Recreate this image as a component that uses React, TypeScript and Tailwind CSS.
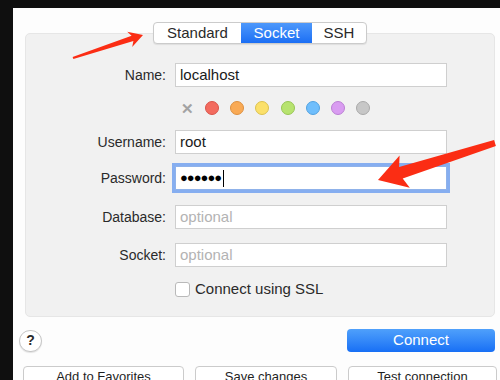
import React from 'react';

const font = { fontFamily: '"Liberation Sans", Arial, sans-serif' };

const colorDots = [
  { bg: 'bg-[#f36b5f]', border: 'border-[#d9544a]' },
  { bg: 'bg-[#f9aa55]', border: 'border-[#dd9040]' },
  { bg: 'bg-[#fbe06a]', border: 'border-[#dcc24f]' },
  { bg: 'bg-[#b7e36f]', border: 'border-[#98c655]' },
  { bg: 'bg-[#6fbefc]', border: 'border-[#52a2e0]' },
  { bg: 'bg-[#d99cf1]', border: 'border-[#bb80d4]' },
  { bg: 'bg-[#c7c7c7]', border: 'border-[#a9a9a9]' },
];

type FieldProps = {
  label: string;
  children: React.ReactNode;
  className?: string;
};

const Field = ({ label, children, className = '' }: FieldProps) => (
  <div className={`flex items-center ${className}`}>
    <div className="w-[140px] text-right text-[14px] text-[#2a2a2a]">{label}</div>
    <div className="ml-[9px]">{children}</div>
  </div>
);

const TextBox = ({ value, placeholder }: { value?: string; placeholder?: string }) => (
  <div className="w-[272px] h-[24px] bg-white border border-[#cfcfcf] flex items-center px-[4px] text-[15px]">
    {value ? (
      <span className="text-[#1a1a1a]">{value}</span>
    ) : (
      <span className="text-[#b3b3b3]">{placeholder}</span>
    )}
  </div>
);

const Arrows = () => (
  <svg className="absolute inset-0 pointer-events-none" width="500" height="380" viewBox="0 0 500 380">
    <polygon
      fill="#fb2d14"
      points="72.6,56.9 131.6,35.7 127.2,31.8 143,35 132.2,47.0 133.4,41.1 73.4,59.1"
    />
    <polygon
      fill="#fb2d14"
      points="494.1,140.1 399.1,167.1 399.6,155.4 378,180 409.8,187.8 402.7,178.5 495.9,145.9"
    />
  </svg>
);

export default function App() {
  return (
    <div className="relative w-[500px] h-[380px] bg-[#0f0f0f] pl-[13px] pt-[8px] flex overflow-hidden" style={font}>
      <div className="flex-1 bg-[#fdfdfd] flex flex-col overflow-hidden">
        {/* tabs */}
        <div className="relative z-10 shrink-0 mt-[14px] ml-[12px] w-[470px] flex justify-center">
          <div className="flex h-[22px] bg-white border border-[#cbcbcb] rounded-[4px] shadow-[0_1px_1px_rgba(0,0,0,0.08)] text-[15px] overflow-hidden">
            <div className="w-[87px] flex items-center justify-center text-[#2a2a2a]">Standard</div>
            <div className="w-[71px] flex items-center justify-center text-white bg-gradient-to-b from-[#4d98fb] to-[#1a6ef4]">Socket</div>
            <div className="w-[54px] flex items-center justify-center text-[#2a2a2a]">SSH</div>
          </div>
        </div>

        {/* panel */}
        <div className="shrink-0 -mt-[11px] ml-[12px] w-[470px] h-[284px] bg-[#f1f1f1] border border-[#e6e6e6] rounded-[5px] pt-[29px]">
          <Field label="Name:">
            <TextBox value="localhost" />
          </Field>

          <div className="flex items-center ml-[149px] mt-[14px] h-[14px]">
            <div className="w-[24px] flex justify-center">
              <span className="text-[15px] font-bold text-[#a3a3a3] leading-none">✕</span>
            </div>
            {colorDots.map((d, i) => (
              <div key={i} className="w-[25.3px] flex justify-center">
                <div className={`w-[14px] h-[14px] rounded-full border ${d.bg} ${d.border}`} />
              </div>
            ))}
          </div>

          <Field label="Username:" className="mt-[15px]">
            <TextBox value="root" />
          </Field>

          <Field label="Password:" className="mt-[12px]">
            <div className="w-[272px] h-[24px] bg-white border border-[#8fb2ea] ring-[3px] ring-[#86aef0] flex items-center px-[4px]">
              <span className="text-[13px] tracking-[-1px] text-black">●●●●●●</span>
              <span className="ml-[2px] w-[1px] h-[17px] bg-black" />
            </div>
          </Field>

          <Field label="Database:" className="mt-[15px]">
            <TextBox placeholder="optional" />
          </Field>

          <Field label="Socket:" className="mt-[14px]">
            <TextBox placeholder="optional" />
          </Field>

          <div className="flex items-center ml-[149px] mt-[11px]">
            <div className="w-[15px] h-[15px] bg-white border border-[#b9b9b9] rounded-[3px]" />
            <span className="ml-[5px] text-[15px] text-[#2a2a2a]">Connect using SSL</span>
          </div>
        </div>

        {/* help + connect */}
        <div className="shrink-0 flex items-center mt-[12px]">
          <div className="ml-[6px] w-[23px] h-[22px] rounded-full bg-white border border-[#c6c6c6] shadow-[0_1px_1px_rgba(0,0,0,0.1)] flex items-center justify-center text-[14px] text-[#2a2a2a] font-bold">
            ?
          </div>
          <div className="ml-auto mr-[5px] w-[148px] h-[23px] rounded-[4px] bg-gradient-to-b from-[#4fa0fb] to-[#176ff5] flex items-center justify-center text-white text-[15px]">
            Connect
          </div>
        </div>

        {/* bottom buttons */}
        <div className="shrink-0 flex mt-[14px] text-[13px] text-[#1f1f1f]">
          <div className="ml-[10px] w-[161px] h-[22px] bg-white border border-[#cbcbcb] rounded-[4px] flex items-center justify-center">
            Add to Favorites
          </div>
          <div className="ml-[11px] w-[142px] h-[22px] bg-white border border-[#cbcbcb] rounded-[4px] flex items-center justify-center">
            Save changes
          </div>
          <div className="ml-[11px] w-[149px] h-[22px] bg-white border border-[#cbcbcb] rounded-[4px] flex items-center justify-center">
            Test connection
          </div>
        </div>
      </div>
      <Arrows />
    </div>
  );
}
